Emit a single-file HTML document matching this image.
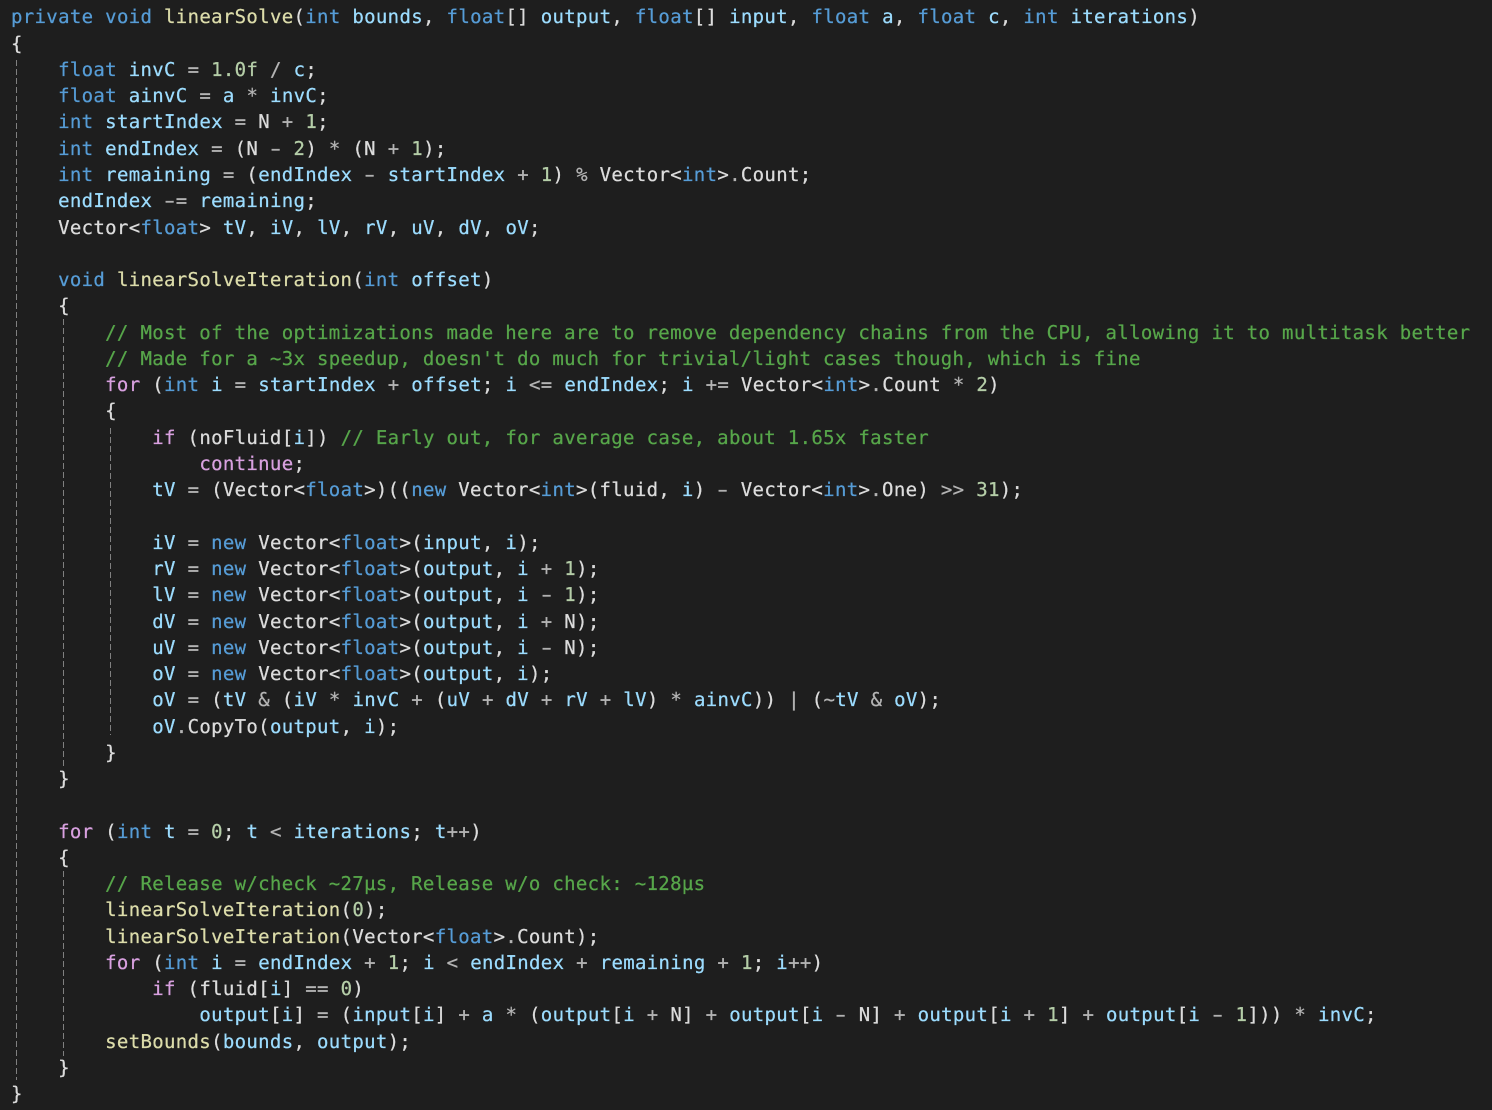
<!DOCTYPE html>
<html><head><meta charset="utf-8">
<style>
html,body{margin:0;padding:0;background:#1e1e1e;width:1492px;height:1110px;overflow:hidden}
pre{position:absolute;left:11px;top:4.4px;margin:0;font-family:"DejaVu Sans Mono","Liberation Mono",monospace;font-size:19px;line-height:26.27px;letter-spacing:.33px;color:#dcdcdc;text-rendering:geometricPrecision;font-variant-ligatures:none;white-space:pre;-webkit-text-stroke:.25px}
.k{color:#569cd6}.c{color:#d8a0df}.m{color:#dcdcaa}.v{color:#9cdcfe}.n{color:#b5cea8}.g{color:#57a64a}.o{color:#b4b4b4}
.h{display:inline-block;transform:scaleX(1.6)}
.r{position:absolute;width:1px;background:repeating-linear-gradient(to bottom,#808080 0,#808080 6px,transparent 6px,transparent 9px)}
</style></head><body>
<div class="r" style="left:16px;top:60px;height:1020px"></div>
<div class="r" style="left:63px;top:319px;height:449px"></div>
<div class="r" style="left:63px;top:871px;height:185px"></div>
<div class="r" style="left:110px;top:428px;height:307px"></div>
<pre><span class="k">private</span> <span class="k">void</span> <span class="m">linearSolve</span>(<span class="k">int</span> <span class="v">bounds</span>, <span class="k">float</span>[] <span class="v">output</span>, <span class="k">float</span>[] <span class="v">input</span>, <span class="k">float</span> <span class="v">a</span>, <span class="k">float</span> <span class="v">c</span>, <span class="k">int</span> <span class="v">iterations</span>)
{
    <span class="k">float</span> <span class="v">invC</span> <span class="o">=</span> <span class="n">1.0f</span> <span class="o">/</span> <span class="v">c</span>;
    <span class="k">float</span> <span class="v">ainvC</span> <span class="o">=</span> <span class="v">a</span> <span class="o">*</span> <span class="v">invC</span>;
    <span class="k">int</span> <span class="v">startIndex</span> <span class="o">=</span> N <span class="o">+</span> <span class="n">1</span>;
    <span class="k">int</span> <span class="v">endIndex</span> <span class="o">=</span> (N <span class="o h">-</span> <span class="n">2</span>) <span class="o">*</span> (N <span class="o">+</span> <span class="n">1</span>);
    <span class="k">int</span> <span class="v">remaining</span> <span class="o">=</span> (<span class="v">endIndex</span> <span class="o h">-</span> <span class="v">startIndex</span> <span class="o">+</span> <span class="n">1</span>) <span class="o">%</span> Vector&lt;<span class="k">int</span>&gt;<span class="o">.</span>Count;
    <span class="v">endIndex</span> <span class="o h">-</span><span class="o">=</span> <span class="v">remaining</span>;
    Vector&lt;<span class="k">float</span>&gt; <span class="v">tV</span>, <span class="v">iV</span>, <span class="v">lV</span>, <span class="v">rV</span>, <span class="v">uV</span>, <span class="v">dV</span>, <span class="v">oV</span>;

    <span class="k">void</span> <span class="m">linearSolveIteration</span>(<span class="k">int</span> <span class="v">offset</span>)
    {
        <span class="g">// Most of the optimizations made here are to remove dependency chains from the CPU, allowing it to multitask better</span>
        <span class="g">// Made for a ~3x speedup, doesn't do much for trivial/light cases though, which is fine</span>
        <span class="c">for</span> (<span class="k">int</span> <span class="v">i</span> <span class="o">=</span> <span class="v">startIndex</span> <span class="o">+</span> <span class="v">offset</span>; <span class="v">i</span> <span class="o">&lt;=</span> <span class="v">endIndex</span>; <span class="v">i</span> <span class="o">+=</span> Vector&lt;<span class="k">int</span>&gt;<span class="o">.</span>Count <span class="o">*</span> <span class="n">2</span>)
        {
            <span class="c">if</span> (noFluid[<span class="v">i</span>]) <span class="g">// Early out, for average case, about 1.65x faster</span>
                <span class="c">continue</span>;
            <span class="v">tV</span> <span class="o">=</span> (Vector&lt;<span class="k">float</span>&gt;)((<span class="k">new</span> Vector&lt;<span class="k">int</span>&gt;(fluid, <span class="v">i</span>) <span class="o h">-</span> Vector&lt;<span class="k">int</span>&gt;<span class="o">.</span>One) <span class="o">&gt;&gt;</span> <span class="n">31</span>);

            <span class="v">iV</span> <span class="o">=</span> <span class="k">new</span> Vector&lt;<span class="k">float</span>&gt;(<span class="v">input</span>, <span class="v">i</span>);
            <span class="v">rV</span> <span class="o">=</span> <span class="k">new</span> Vector&lt;<span class="k">float</span>&gt;(<span class="v">output</span>, <span class="v">i</span> <span class="o">+</span> <span class="n">1</span>);
            <span class="v">lV</span> <span class="o">=</span> <span class="k">new</span> Vector&lt;<span class="k">float</span>&gt;(<span class="v">output</span>, <span class="v">i</span> <span class="o h">-</span> <span class="n">1</span>);
            <span class="v">dV</span> <span class="o">=</span> <span class="k">new</span> Vector&lt;<span class="k">float</span>&gt;(<span class="v">output</span>, <span class="v">i</span> <span class="o">+</span> N);
            <span class="v">uV</span> <span class="o">=</span> <span class="k">new</span> Vector&lt;<span class="k">float</span>&gt;(<span class="v">output</span>, <span class="v">i</span> <span class="o h">-</span> N);
            <span class="v">oV</span> <span class="o">=</span> <span class="k">new</span> Vector&lt;<span class="k">float</span>&gt;(<span class="v">output</span>, <span class="v">i</span>);
            <span class="v">oV</span> <span class="o">=</span> (<span class="v">tV</span> <span class="o">&amp;</span> (<span class="v">iV</span> <span class="o">*</span> <span class="v">invC</span> <span class="o">+</span> (<span class="v">uV</span> <span class="o">+</span> <span class="v">dV</span> <span class="o">+</span> <span class="v">rV</span> <span class="o">+</span> <span class="v">lV</span>) <span class="o">*</span> <span class="v">ainvC</span>)) <span class="o">|</span> (<span class="o">~</span><span class="v">tV</span> <span class="o">&amp;</span> <span class="v">oV</span>);
            <span class="v">oV</span><span class="o">.</span>CopyTo(<span class="v">output</span>, <span class="v">i</span>);
        }
    }

    <span class="c">for</span> (<span class="k">int</span> <span class="v">t</span> <span class="o">=</span> <span class="n">0</span>; <span class="v">t</span> <span class="o">&lt;</span> <span class="v">iterations</span>; <span class="v">t</span><span class="o">++</span>)
    {
        <span class="g">// Release w/check ~27μs, Release w/o check: ~128μs</span>
        <span class="m">linearSolveIteration</span>(<span class="n">0</span>);
        <span class="m">linearSolveIteration</span>(Vector&lt;<span class="k">float</span>&gt;<span class="o">.</span>Count);
        <span class="c">for</span> (<span class="k">int</span> <span class="v">i</span> <span class="o">=</span> <span class="v">endIndex</span> <span class="o">+</span> <span class="n">1</span>; <span class="v">i</span> <span class="o">&lt;</span> <span class="v">endIndex</span> <span class="o">+</span> <span class="v">remaining</span> <span class="o">+</span> <span class="n">1</span>; <span class="v">i</span><span class="o">++</span>)
            <span class="c">if</span> (fluid[<span class="v">i</span>] <span class="o">==</span> <span class="n">0</span>)
                <span class="v">output</span>[<span class="v">i</span>] <span class="o">=</span> (<span class="v">input</span>[<span class="v">i</span>] <span class="o">+</span> <span class="v">a</span> <span class="o">*</span> (<span class="v">output</span>[<span class="v">i</span> <span class="o">+</span> N] <span class="o">+</span> <span class="v">output</span>[<span class="v">i</span> <span class="o h">-</span> N] <span class="o">+</span> <span class="v">output</span>[<span class="v">i</span> <span class="o">+</span> <span class="n">1</span>] <span class="o">+</span> <span class="v">output</span>[<span class="v">i</span> <span class="o h">-</span> <span class="n">1</span>])) <span class="o">*</span> <span class="v">invC</span>;
        <span class="m">setBounds</span>(<span class="v">bounds</span>, <span class="v">output</span>);
    }
}</pre>
</body></html>
